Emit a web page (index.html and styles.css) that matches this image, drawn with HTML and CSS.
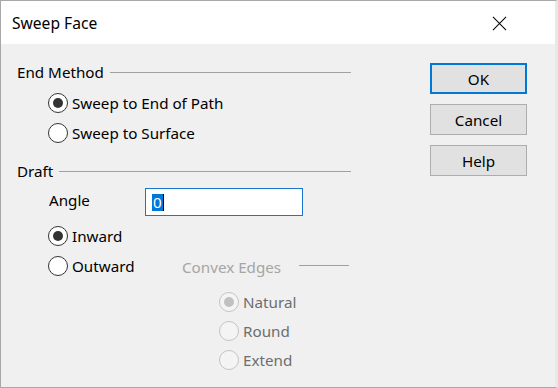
FILE: index.html
```html
<!DOCTYPE html>
<html>
<head>
<meta charset="utf-8">
<link rel="stylesheet" href="styles.css">
</head>
<body>
<div class="window">
  <div class="titlebar">
    <span class="title">Sweep Face</span>
    <svg class="close" width="16" height="16" viewBox="0 0 16 16"><path d="M1 1 L15 15 M15 1 L1 15" stroke="#000" stroke-width="1.1" fill="none"/></svg>
  </div>
  <div class="content">
    <div class="left">
      <div class="group-head"><span>End Method</span><span class="rule"></span></div>
      <div class="opts end-opts">
        <div class="radio"><span class="circle checked"></span><span>Sweep to End of Path</span></div>
        <div class="radio"><span class="circle"></span><span>Sweep to Surface</span></div>
      </div>
      <div class="group-head draft-head"><span>Draft</span><span class="rule"></span></div>
      <div class="angle-row">
        <span class="angle-label">Angle</span>
        <div class="input"><span class="sel">0</span><span class="caret"></span></div>
      </div>
      <div class="opts dir-opts">
        <div class="radio"><span class="circle checked"></span><span>Inward</span></div>
        <div class="radio outward-row">
          <span class="circle"></span><span class="outward-text">Outward</span>
          <div class="group-head convex-head"><span>Convex Edges</span><span class="rule"></span></div>
        </div>
      </div>
      <div class="opts convex-opts">
        <div class="radio disabled"><span class="circle checked"></span><span>Natural</span></div>
        <div class="radio disabled"><span class="circle"></span><span>Round</span></div>
        <div class="radio disabled"><span class="circle"></span><span>Extend</span></div>
      </div>
    </div>
    <div class="buttons">
      <div class="btn default">OK</div>
      <div class="btn">Cancel</div>
      <div class="btn">Help</div>
    </div>
  </div>
</div>
</body>
</html>
```

FILE: styles.css
```css
html, body {
  margin: 0;
  padding: 0;
  background: #f0f0f0;
}
body {
  font-family: "Noto Sans", "Open Sans", sans-serif;
  font-size: 15.2px;
  color: #000;
}
.window {
  width: 558px;
  height: 388px;
  box-sizing: border-box;
  border: 1px solid #a8a8a8;
  border-right-width: 3px;
  border-right-color: #e8e8e8;
  background: #f0f0f0;
  display: flex;
  flex-direction: column;
  overflow: hidden;
}
.titlebar {
  height: 43px;
  background: #fff;
  display: flex;
  align-items: center;
  justify-content: space-between;
  padding: 0 48px 0 11px;
  flex: none;
}
.title {
  font-size: 15.6px;
  margin-top: 1px;
}
.close {
  width: 15px;
  height: 15px;
  margin-top: 1px;
}
.content {
  display: flex;
  flex: 1;
}
.left {
  width: 334px;
  padding: 18px 0 0 16px;
  display: flex;
  flex-direction: column;
}
.group-head {
  height: 20px;
  display: flex;
  align-items: center;
  gap: 6px;
}
.rule {
  flex: 1;
  height: 1px;
  background: #a0a0a0;
}
.opts {
  display: flex;
  flex-direction: column;
  padding-left: 31px;
}
.end-opts {
  margin-top: 6px;
}
.radio {
  height: 30px;
  display: flex;
  align-items: center;
  gap: 4px;
}
.circle {
  width: 18px;
  height: 18px;
  border: 1px solid #333;
  border-radius: 50%;
  background: #fff;
  box-sizing: content-box;
  display: flex;
  align-items: center;
  justify-content: center;
  flex: none;
}
.circle.checked::after {
  content: "";
  width: 10px;
  height: 10px;
  border-radius: 50%;
  background: #333;
}
.draft-head {
  margin-top: 13px;
}
.angle-row {
  margin-top: 7px;
  height: 28px;
  display: flex;
  align-items: center;
  padding-left: 32px;
}
.angle-label {
  width: 96px;
  margin-top: -4px;
}
.input {
  width: 158px;
  height: 28px;
  box-sizing: border-box;
  border: 1px solid #1a74d2;
  background: #fff;
  display: flex;
  align-items: center;
  padding-left: 6px;
}
.sel {
  background: #0078d7;
  color: #fff;
  height: 17px;
  line-height: 17px;
  padding: 0 1px;
}
.caret {
  width: 1px;
  height: 17px;
  background: #000;
}
.dir-opts {
  margin-top: 5px;
}
.outward-row {
  gap: 4px;
}
.outward-text {
  width: 106px;
}
.convex-head {
  width: 167px;
  gap: 18px;
  color: #a5a5a5;
  margin-top: 1px;
}
.convex-head .rule {
  margin-top: -3px;
}
.convex-opts {
  padding-left: 202px;
  margin-top: 6px;
}
.convex-opts .radio {
  height: 29px;
}
.radio.disabled {
  color: #6d6d6d;
}
.radio.disabled .circle {
  border-color: #c4c4c4;
  background: #f4f4f4;
}
.radio.disabled .circle.checked::after {
  background: #c0c0c0;
}
.buttons {
  margin-left: 79px;
  padding-top: 19px;
  display: flex;
  flex-direction: column;
  gap: 10px;
}
.btn {
  width: 95px;
  height: 29px;
  border: 1px solid #adadad;
  background: #e1e1e1;
  display: flex;
  align-items: center;
  justify-content: center;
}
.btn.default {
  width: 93px;
  height: 27px;
  border: 2px solid #0078d7;
}
```
